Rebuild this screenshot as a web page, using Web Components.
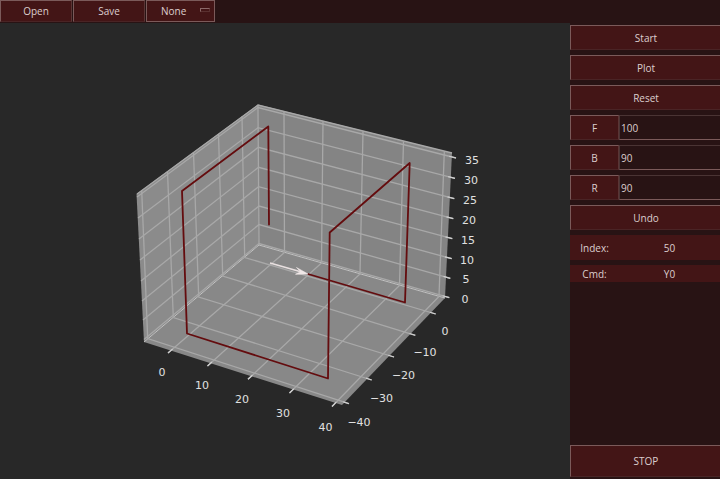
<!DOCTYPE html>
<html lang="en">
<head>
<meta charset="utf-8">
<title>Path plotter</title>
<style>
html, body { height: 100%; margin: 0; }
body { background: #281314; color: #dccece; font: 10px/16px "Open Sans", "Noto Sans", sans-serif; }
</style>
</head>
<body>
<plot-app></plot-app>
<script>
const define = (name, html, setup) => customElements.define(name, class extends HTMLElement {
  connectedCallback() {
    if (this.shadowRoot) return;
    const t = document.createElement('template');
    t.innerHTML = html;
    this.attachShadow({ mode: 'open' }).append(t.content.cloneNode(true));
    if (setup) setup(this, this.shadowRoot);
  }
});

const face = `
  background: #431516; color: inherit; font: inherit; margin: 0; padding: 0;
  box-sizing: border-box; border: 1px solid; border-color: #7b5a5a #5a3535 #4a2425 #7b5a5a; border-radius: 0;`;

define('tool-button', `
<style>
:host { display: block; height: 25px; }
button { ${face} display: block; width: 100%; height: 100%; }
:host([flush]) button { border-right: 0; padding-left: 1px; }
</style>
<button type="button"><slot></slot></button>`);

define('mode-select', `
<style>
:host { display: block; position: relative; }
select { ${face} appearance: none; width: 100%; height: 100%; padding: 0 0 0 14px; border-color: #7b5a5a; }
i { position: absolute; right: 5px; top: 8px; width: 10px; height: 4px; box-sizing: border-box;
  border: 1px solid; border-color: #8b6868 #5a3030 #5a3030 #8b6868; pointer-events: none; }
</style>
<select aria-label="Mode"><option>None</option></select><i></i>`);

define('step-field', `
<style>
:host { display: grid; grid-template-columns: 49px minmax(0, 1fr); height: 25px; }
input { box-sizing: border-box; min-width: 0; width: 100%; height: 100%; margin: 0; padding: 0 1px; border: 1px solid;
  border-color: #4a3434 #4a3434 #7b5a5a #4a3434; border-right: 0; border-radius: 0; background: #281314; color: inherit; font: inherit; }
</style>
<tool-button></tool-button><input type="text">`, (host, root) => {
  const key = host.getAttribute('key');
  root.querySelector('tool-button').textContent = key;
  const input = root.querySelector('input');
  input.value = host.getAttribute('value');
  input.setAttribute('aria-label', key);
});

define('status-row', `
<style>
:host { display: grid; grid-template-columns: 49px minmax(0, 1fr); align-items: center; text-align: center; background: #431516; height: 25px; }
:host([compact]) { height: 17px; }
</style>
<span><slot name="label"></slot></span><span><slot></slot></span>`);

define('path-plot', `
<style>
:host { display: block; min-width: 0; min-height: 0; background: #282828; }
svg { display: block; width: 100%; height: 100%; }
text { font: 11px "DejaVu Sans", sans-serif; fill: #e0e0e0; text-anchor: middle; }
.grid { stroke: #a8a8a8; stroke-width: 1.3; fill: none; }
.tick { stroke: #d0d0d0; stroke-width: 1.2; }
.path { stroke: #640c0e; stroke-width: 1.8; fill: none; stroke-linejoin: round; stroke-linecap: round; }
</style>
<svg viewBox="0 23 570 456" role="img" aria-label="3D path plot">
  <path fill="#8b8b8b" d="M136.500 194 258 104.500 259 245 144 342Z"/>
  <path fill="#848484" d="M258 104.500 452 153 445 298 259 245Z"/>
  <path fill="#888" d="M144 342 259 245 445 298 342 405Z"/>
  <path class="grid" d="M137 194 258 105 452 153M258 105 259 245"/>
  <path stroke="#c4c4c4" fill="none" d="M144 342 259 245 445 298"/>
  <g id="lines"></g>
  <path class="path" d="M269 224.500 268.300 126.500 182 191 187 333.500 328 378.500 329.700 232.500 409.700 163 405 302.500 308 274"/>
  <path stroke="#e8e0e0" stroke-width="1.800" fill="none" d="M270 263 305 273"/>
  <path fill="#f0e8e8" stroke="#f0e8e8" stroke-width=".6" d="M308 274 296.500 267.500 300.500 271.700 295.500 274.300Z"/>
  <g id="labels"></g>
</svg>`, (host, root) => {
  const ns = 'http://www.w3.org/2000/svg';
  const make = (parent, tag, attrs, text) => {
    const e = document.createElementNS(ns, tag);
    for (const k in attrs) e.setAttribute(k, attrs[k]);
    if (text) e.textContent = text;
    parent.append(e);
  };
  const lines = root.querySelector('#lines'), labels = root.querySelector('#labels');
  // Bright mark over the last few units of a grid line
  const tick = (a, b, length) => {
    const n = Math.hypot(b[0] - a[0], b[1] - a[1]);
    const u = [(b[0] - a[0]) / n, (b[1] - a[1]) / n];
    make(lines, 'path', { class: 'tick', d: `M${b[0] - u[0] * length} ${b[1] - u[1] * length}L${b[0]} ${b[1]}` });
  };
  const draw = (p, length) => {
    make(lines, 'path', { class: 'grid', d: 'M' + p.join('L') });
    tick(p[1], p[2], length);
  };
  // x axis: wall top, wall foot, front tick end
  [[[284,111.500],[284.500,252.500],[168,353]], [[323,121.500],[321.500,263],[207.500,366]], [[363,131.500],[360,274],[248,379.300]],
   [[403.500,141.500],[399.500,285.500],[289.500,393]], [[444.300,151.500],[439,296.500],[332,406.500]]].forEach(p => draw(p, 6));
  // y axis: wall top, wall foot, right tick end
  [[[141.700,190.500],[147.700,338.500],[349,403.700]], [[167.500,171.500],[173.300,317.500],[371.700,380]], [[193.500,152.500],[198.700,297],[394,357]],
   [[218.500,134],[222.700,276],[415.300,335.300]], [[242,116.500],[244.700,257.500],[435.700,314]]].forEach(p => draw(p, 6));
  // z axis: left edge, back corner, right tick end
  [[[137,197],[258,107.500],[456,158]], [[138,218],[258,127.700],[455,178.300]], [[139,239],[258.300,147.300],[454.300,198.700]],
   [[140,260],[258.500,167.300],[453.300,218.700]], [[141,281],[258.500,186.700],[452.300,238.700]], [[142,301],[259,206],[451.700,258.700]],
   [[143,320],[259,224.500],[450.300,278.300]], [[144,339.500],[259,243.500],[449.300,297.700]]].forEach(p => draw(p, 7));
  [['0',162,376],['10',202,389],['20',242,403],['30',283,417],['40',325.500,431],
   ['−40',359,426],['−30',381.500,402],['−20',403.500,379],['−10',425,356],['0',445,335],
   ['0',465,302.500],['5',466,283],['10',467,264],['15',468,244],['20',469,224],['25',470,204],['30',471,184],['35',472,163.500]]
    .forEach(([s, x, y]) => make(labels, 'text', { x, y }, s));
});

define('plot-app', `
<style>
:host { display: grid; grid-template: 23px minmax(0, 1fr) / minmax(0, 1fr) 150px; min-height: 100vh; }
header { grid-column: 1 / -1; display: flex; gap: 1px; padding-bottom: 1px; }
header tool-button { width: 72px; height: 22px; }
mode-select { width: 69px; height: 22px; }
aside { display: flex; flex-direction: column; gap: 5px; padding: 2px 0; }
.stop { margin-top: auto; height: 32px; }
</style>
<header><tool-button>Open</tool-button><tool-button>Save</tool-button><mode-select></mode-select></header>
<path-plot></path-plot>
<aside>
  <tool-button flush>Start</tool-button>
  <tool-button flush>Plot</tool-button>
  <tool-button flush>Reset</tool-button>
  <step-field key="F" value="100"></step-field>
  <step-field key="B" value="90"></step-field>
  <step-field key="R" value="90"></step-field>
  <tool-button flush>Undo</tool-button>
  <status-row><span slot="label">Index:</span>50</status-row>
  <status-row compact><span slot="label">Cmd:</span>Y0</status-row>
  <tool-button flush class="stop">STOP</tool-button>
</aside>`);
</script>
</body>
</html>
